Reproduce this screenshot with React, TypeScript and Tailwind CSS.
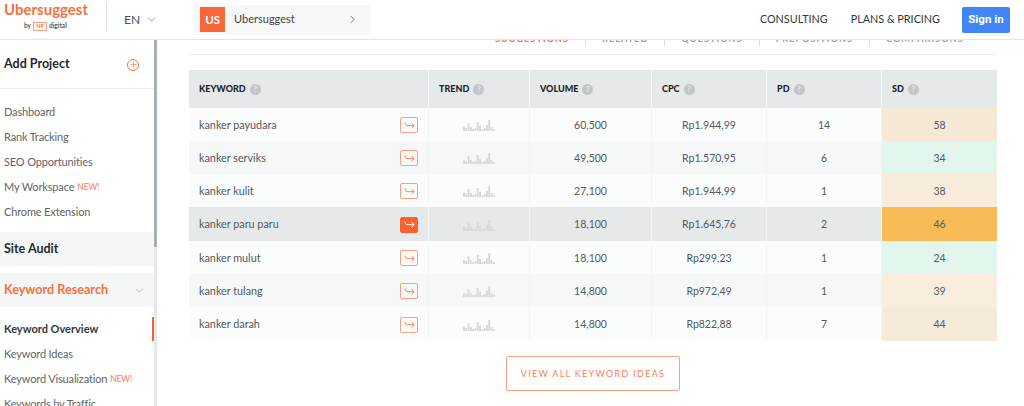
import { ChevronDown, ChevronRight, Plus } from "lucide-react";

const rows = [
  { keyword: "kanker payudara", volume: "60,500", cpc: "Rp1.944,99", pd: "14", sd: "58", sdBg: "bg-[#f5e9d6]", h: "h-[33px]", bg: "bg-[#fbfcfc]" },
  { keyword: "kanker serviks", volume: "49,500", cpc: "Rp1.570,95", pd: "6", sd: "34", sdBg: "bg-[#e2f6ee]", h: "h-[33px]", bg: "bg-[#f6f8f8]" },
  { keyword: "kanker kulit", volume: "27,100", cpc: "Rp1.944,99", pd: "1", sd: "38", sdBg: "bg-[#f7ecdb]", h: "h-[33px]", bg: "bg-[#fbfcfc]" },
  { keyword: "kanker paru paru", volume: "18,100", cpc: "Rp1.645,76", pd: "2", sd: "46", sdBg: "bg-[#f8bb55]", h: "h-[34px]", bg: "bg-[#e6e9ea]", active: true },
  { keyword: "kanker mulut", volume: "18,100", cpc: "Rp299,23", pd: "1", sd: "24", sdBg: "bg-[#e2f6ee]", h: "h-[33px]", bg: "bg-[#fbfcfc]" },
  { keyword: "kanker tulang", volume: "14,800", cpc: "Rp972,49", pd: "1", sd: "39", sdBg: "bg-[#f9eedd]", h: "h-[33px]", bg: "bg-[#f6f8f8]" },
  { keyword: "kanker darah", volume: "14,800", cpc: "Rp822,88", pd: "7", sd: "44", sdBg: "bg-[#f6ead9]", h: "h-[34px]", bg: "bg-[#fbfcfc]" },
];

const trendBars = [4, 3, 8, 4, 2, 3, 9, 5, 2, 3, 6, 11, 4, 2];

function HelpDot() {
  return (
    <span className="ml-[4px] flex h-[11px] w-[11px] items-center justify-center rounded-full bg-[#c3c6c8] text-[8px] font-bold leading-none text-[#e6e9ea]">
      ?
    </span>
  );
}

function HeadCell({ label, className }: { label: string; className: string }) {
  return (
    <div className={`flex items-center text-[9px] font-black text-[#1f2326] ${className}`}>
      {label}
      <HelpDot />
    </div>
  );
}

function Trend() {
  return (
    <svg width="32" height="12" viewBox="0 0 32 12" className="block">
      {trendBars.map((h, i) => (
        <rect key={i} x={i * 2.3} y={12 - h} width="1.9" height={h} fill="#d6d8d9" />
      ))}
    </svg>
  );
}

function ArrowButton({ active }: { active?: boolean }) {
  return (
    <span
      className={`flex h-[16px] w-[18px] items-center justify-center rounded-[2px] border ${
        active ? "border-[#f9622f] bg-[#f9622f] text-white" : "border-[#f9a084] bg-transparent text-[#f78257]"
      }`}
    >
      <svg width="11" height="9" viewBox="0 0 11 9" fill="none" stroke="currentColor" strokeWidth="1">
        <path d="M1 1.5c0 2.2 1 3.2 3 3.2h6M7.6 2.2l2.6 2.5-2.6 2.5" />
      </svg>
    </span>
  );
}

function NavLink({ label, isNew, className = "" }: { label: string; isNew?: boolean; className?: string }) {
  return (
    <div className={`flex h-[25px] items-center whitespace-nowrap pl-[4px] pt-[1px] text-[11px] tracking-[-0.15px] text-[#5f6467] ${className}`}>
      {label}
      {isNew && <span className="ml-[3px] text-[8.5px] text-[#f9775a]">NEW!</span>}
    </div>
  );
}

function Header() {
  return (
    <header className="relative z-10 flex h-[40px] shrink-0 items-center border-b border-[#e3e5e6] bg-white pr-[14px]">
      <div className="mb-[8px] mt-[2px] flex w-[107px] flex-col self-stretch border-r border-[#dfe1e2] pl-[4px]">
        <span className="text-[15px] font-bold leading-[14px] text-[#f7703f]">Ubersuggest</span>
        <div className="mt-[6px] flex items-center pl-[20px] text-[6.5px] font-bold leading-none text-[#555a5d]">
          by
          <span className="mx-[2px] flex h-[9px] w-[14px] items-center justify-center border border-[#f9a084] text-[5.5px] text-[#f7703f]">
            NP
          </span>
          digital
        </div>
      </div>
      <span className="ml-[17px] text-[12px] text-[#4a4f52]">EN</span>
      <ChevronDown size={13} strokeWidth={1.4} className="ml-[5px] text-[#777c7f]" />
      <div className="ml-[36px] flex h-[30px] w-[176px] items-center rounded-[2px] bg-[#f7f8f8] pl-[6px]">
        <span className="flex h-[25px] w-[25px] items-center justify-center bg-[#f7673a] text-[11.5px] font-bold text-white">US</span>
        <span className="ml-[9px] text-[11px] text-[#3e4346]">Ubersuggest</span>
        <ChevronRight size={13} strokeWidth={1.4} className="ml-[51px] text-[#555a5d]" />
      </div>
      <div className="ml-auto flex items-center whitespace-nowrap text-[10.8px] text-[#33383b]">
        <span>CONSULTING</span>
        <span className="ml-[23px]">PLANS &amp; PRICING</span>
        <button className="ml-[22px] h-[26px] w-[48px] rounded-[2px] bg-[#4285f4] font-['Roboto',sans-serif] text-[11.5px] font-bold text-white">
          Sign in
        </button>
      </div>
    </header>
  );
}

function Sidebar() {
  return (
    <aside className="relative flex w-[157px] shrink-0">
      <div className="w-[154px] shrink-0">
        <div className="flex h-[49px] items-center justify-between border-b border-[#eceeee] pl-[4px] pr-[15px] pt-[1px]">
          <span className="text-[12.5px] font-bold text-[#25292c]">Add Project</span>
          <span className="flex h-[12px] w-[12px] items-center justify-center rounded-full border border-[#f7703f] text-[#f7703f]">
            <Plus size={9} strokeWidth={1.6} />
          </span>
        </div>
        <div className="mt-[10px]">
          <NavLink label="Dashboard" />
          <NavLink label="Rank Tracking" />
          <NavLink label="SEO Opportunities" />
          <NavLink label="My Workspace" isNew />
          <NavLink label="Chrome Extension" />
        </div>
        <div className="mt-[8px] flex h-[34px] items-center bg-[#f5f6f6] pl-[4px] pt-[1px] text-[12.5px] font-bold text-[#25292c]">Site Audit</div>
        <div className="mt-[7px] flex h-[34px] items-center justify-between bg-[#f5f6f6] pl-[4px] pr-[8px] pt-[1px]">
          <span className="text-[12.6px] font-bold text-[#f7703f]">Keyword Research</span>
          <ChevronDown size={13} strokeWidth={1.8} className="text-[#b9bcbe]" />
        </div>
        <div className="mt-[10px] flex h-[24px] items-center justify-between">
          <span className="pl-[4px] text-[11px] font-bold text-[#33383b]">Keyword Overview</span>
          <span className="h-[24px] w-[2px] bg-[#f7602f]" />
        </div>
        <NavLink label="Keyword Ideas" />
        <NavLink label="Keyword Visualization" isNew />
        <NavLink label="Keywords by Traffic" />
      </div>
      {/* scrollbar */}
      <div className="w-[3px] shrink-0 bg-[#e6e8e9]">
        <div className="h-[207px] bg-[#a9b0b4]" />
      </div>
    </aside>
  );
}

function TabDivider() {
  return <span className="mx-[16px] h-[7px] w-px self-end bg-[#dfe1e2]" />;
}

function Tabs() {
  return (
    <div className="-mt-[10px] ml-[32px] h-[25px] w-[808px] border-b border-[#ebedee] text-[9px] font-bold tracking-[1.1px] text-[#9a9ea1]">
      <div className="ml-[306px] flex h-[16px] items-center whitespace-nowrap pt-[1px]">
        <span className="text-[#f7703f]">SUGGESTIONS</span>
        <TabDivider />
        <span>RELATED</span>
        <TabDivider />
        <span>QUESTIONS</span>
        <TabDivider />
        <span>PREPOSITIONS</span>
        <TabDivider />
        <span>COMPARISONS</span>
      </div>
    </div>
  );
}

function KeywordTable() {
  return (
    <div className="ml-[32px] mt-[15px] w-[808px]">
      <div className="flex h-[38px] bg-[#e6e9ea]">
        <HeadCell label="KEYWORD" className="w-[240px] border-r border-[#f7f8f8] pl-[10px]" />
        <HeadCell label="TREND" className="w-[101px] border-r border-[#f7f8f8] pl-[10px]" />
        <HeadCell label="VOLUME" className="w-[122px] border-r border-[#f7f8f8] pl-[10px]" />
        <HeadCell label="CPC" className="w-[115px] border-r border-[#f7f8f8] pl-[10px]" />
        <HeadCell label="PD" className="w-[115px] border-r border-[#f7f8f8] pl-[10px]" />
        <HeadCell label="SD" className="w-[115px] pl-[10px]" />
      </div>
      {rows.map((row) => (
        <div key={row.keyword} className={`flex text-[10.5px] text-[#55595c] ${row.h} ${row.bg}`}>
          <div className="flex w-[240px] items-center justify-between border-r border-[#f3f5f5] pl-[10px] pr-[10px] pt-[1px]">
            <span className="text-[10.8px]">{row.keyword}</span>
            <ArrowButton active={row.active} />
          </div>
          <div className="flex w-[101px] items-center justify-center border-r border-[#f3f5f5] pt-[1px]">
            <Trend />
          </div>
          <div className="flex w-[122px] items-center justify-center border-r border-[#f3f5f5] pt-[2px]">{row.volume}</div>
          <div className="flex w-[115px] items-center justify-center border-r border-[#f3f5f5] pt-[2px]">{row.cpc}</div>
          <div className="flex w-[115px] items-center justify-center border-r border-[#f3f5f5] pt-[2px]">{row.pd}</div>
          <div className={`flex w-[115px] items-center justify-center pt-[2px] ${row.sdBg}`}>{row.sd}</div>
        </div>
      ))}
      <div className="mt-[15px] flex justify-center">
        <button className="h-[35px] w-[174px] rounded-[2px] border border-[#f9a084] text-[9px] tracking-[1.3px] text-[#f7805a]">
          VIEW ALL KEYWORD IDEAS
        </button>
      </div>
    </div>
  );
}

export default function App() {
  return (
    <div className="flex h-[406px] w-[1024px] flex-col overflow-hidden bg-white font-['Lato','Open_Sans',sans-serif]">
      <Header />
      <div className="flex min-h-0 flex-1">
        <Sidebar />
        <main className="min-w-0 flex-1">
          <Tabs />
          <KeywordTable />
        </main>
      </div>
    </div>
  );
}
